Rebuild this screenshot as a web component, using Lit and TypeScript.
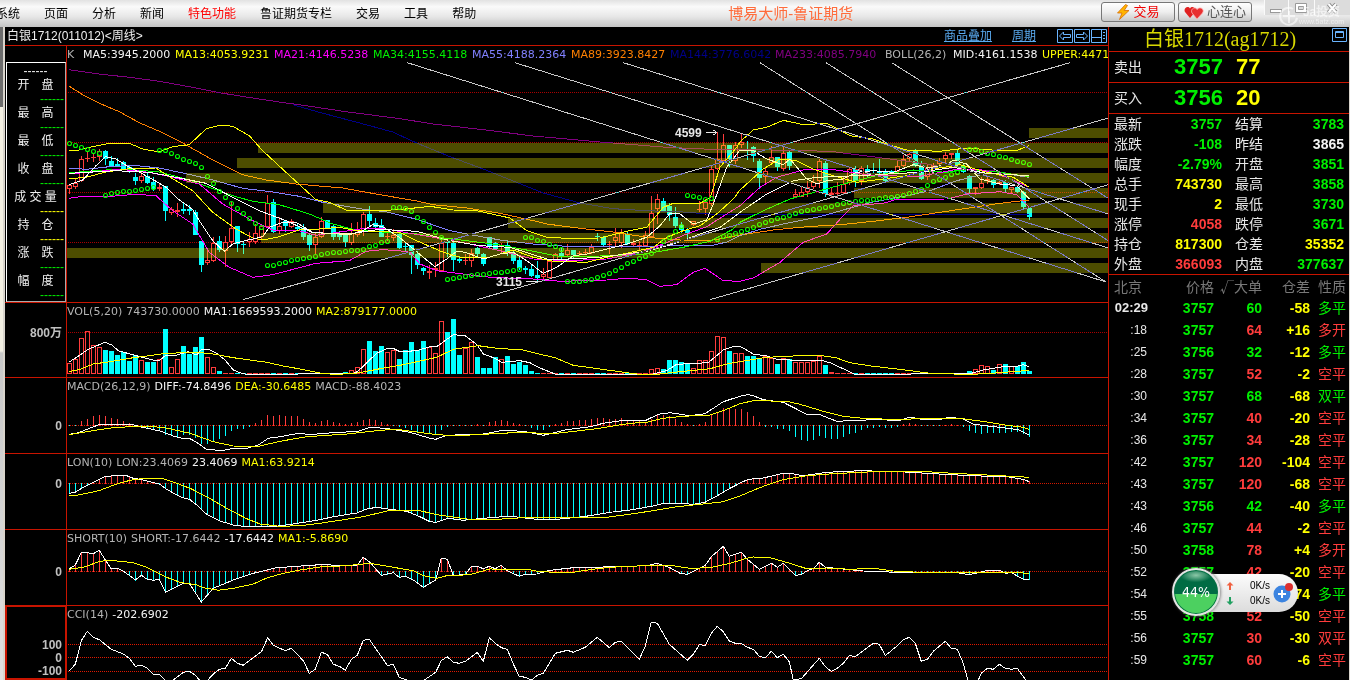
import { LitElement, html, css, svg } from "lit";
import { customElement } from "lit/decorators.js";

type Pts = number[];

/* Series are recorded on a grid of thirds of a pixel, in up to three stretches. */
const join = (step: number[], ...parts: Pts[]): Pts =>
  parts.flatMap((p, k) => p.map((v, j) => (j % 2 ? v : v + step[k])));
const S_MAIN = [0, 1002, 2022];
const S_SUB = [0, 1110, 2220];

const line = (pts: Pts, color: string) => {
  let d = "";
  for (let i = 0; i < pts.length; i += 2) d += `${(pts[i] / 3).toFixed(1)},${(pts[i + 1] / 3).toFixed(1)} `;
  return svg`<polyline points=${d} fill="none" stroke=${color} />`;
};

const at = (pts: Pts, x: number): number => {
  for (let i = 2; i < pts.length; i += 2) {
    if (x <= pts[i]) {
      const t = (x - pts[i - 2]) / (pts[i] - pts[i - 2] || 1);
      return pts[i - 1] + (pts[i + 1] - pts[i - 1]) * Math.max(0, t);
    }
  }
  return pts[pts.length - 1];
};

/* direction (1 rises, 0 falls), high, body top, body bottom, low */
const CANDLES = `1 420 422 436 450|1 405 418 430 436|1 335 345 412 415|1 325 342 345 355|1 330 340 343 355|1 315 320 338 352|0 318 321 345 362|0 335 350 368 368|0 342 360 366 370|0 350 355 374 376|0 365 370 375 388|0 388 398 411 424|1 385 396 412 418|0 388 396 416 420|0 400 415 435 440|1 418 430 434 442|0 425 426 500 530|1 488 495 508 513|1 478 498 503 520|0 478 496 500 510|0 484 496 500 514|0 498 503 572 572|0 590 591 662 684|1 615 648 656 662|1 580 598 650 654|0 577 591 618 624|1 575 594 620 668|1 475 552 594 600|0 545 546 600 624|0 592 600 604 630|1 565 584 594 608|1 540 568 594 600|1 540 545 578 584|1 453 478 548 550|0 465 474 563 567|1 520 546 560 570|0 528 532 545 565|1 525 530 550 552|0 540 548 555 560|0 540 552 578 588|0 570 574 603 622|1 565 580 602 630|1 520 532 580 582|0 527 529 552 556|0 540 546 578 588|0 562 570 578 588|0 566 574 594 608|1 538 566 596 602|1 535 564 572 578|1 505 510 560 576|0 486 509 530 545|0 522 538 550 558|0 525 543 578 580|1 568 576 580 590|1 556 574 583 590|0 570 571 611 614|0 595 605 609 622|0 602 604 632 690|0 620 630 662 676|0 668 672 682 692|1 663 680 688 704|1 655 672 678 698|1 585 596 680 684|0 585 592 598 640|0 585 596 648 680|0 635 646 650 658|1 630 648 652 664|1 615 626 652 668|0 610 612 630 636|0 628 630 660 665|0 578 580 605 615|0 595 597 614 616|1 598 604 610 628|0 590 604 626 636|0 620 630 650 660|0 632 648 673 678|0 666 672 678 690|0 660 676 697 700|0 652 693 702 712|1 672 690 700 710|1 650 652 702 704|1 628 630 650 654|0 610 627 640 644|1 600 618 634 640|0 617 619 634 645|1 620 626 630 640|1 615 624 628 634|1 600 608 628 630|0 568 576 580 590|0 576 578 602 606|1 590 600 604 630|1 552 580 592 606|1 555 564 598 612|0 560 570 600 602|1 585 598 602 606|1 590 602 606 620|1 562 572 606 610|1 455 508 578 582|1 450 465 496 540|0 462 470 500 504|0 478 485 512 530|0 490 520 546 552|0 534 542 558 566|0 552 558 566 582|1 530 532 542 546|1 470 494 498 504|1 465 474 494 512|1 365 376 480 486|1 265 345 376 378|1 270 303 350 355|0 303 304 346 370|1 295 303 350 360|1 270 295 302 312|0 290 316 320 348|0 305 310 335 355|0 346 350 402 434|1 370 380 400 416|1 306 340 358 362|0 338 340 368 380|1 310 328 376 380|0 322 324 366 378|1 436 450 460 462|1 425 443 458 460|1 412 428 445 460|1 392 414 430 434|1 345 352 412 432|0 350 357 450 458|1 430 446 452 460|1 414 448 450 460|1 400 420 448 454|1 372 376 418 424|0 366 374 410 430|1 366 372 410 424|0 362 374 385 400|0 358 378 382 388|0 345 380 386 394|0 375 382 410 414|0 378 380 388 390|1 350 365 384 390|1 334 345 366 370|1 328 330 346 354|0 315 320 366 370|0 350 362 404 408|1 360 370 400 408|1 358 362 368 374|1 342 352 360 366|1 324 334 344 356|1 326 328 334 344|0 316 328 364 366|0 360 366 384 386|0 392 396 434 450|1 428 430 436 452|1 400 416 432 436|1 400 404 410 420|0 402 408 424 432|1 405 414 420 424|0 408 414 434 444|1 428 430 438 450|0 422 428 444 448|0 440 444 488 494|0 488 492 520 528`
  .split("|").map((r) => r.split(" ").map(Number));

const SAR = [298,303,310,316,322,328,452,448,445,442,442,439,436,433,430,317,319,328,337,344,352,358,370,397,418,440,460,478,493,508,522,536,548,664,662,656,653,649,645,641,638,635,631,628,625,623,621,619,617,615,607,602,595,590,488,488,493,502,518,530,548,565,580,704,701,698,695,692,691,690,688,685,683,681,678,675,580,580,587,592,600,607,614,712,712,711,708,704,700,692,686,679,668,658,650,642,635,628,614,592,578,562,547,452,457,460,464,463,585,577,572,567,560,554,548,540,534,528,522,518,514,507,502,499,496,493,490,485,481,478,474,472,469,467,465,462,460,458,456,453,447,442,434,422,412,405,398,390,384,372,314,316,322,328,331,337,340,346,350,355,361];

const flat = (n: number) => Array(n).fill(219);
const VOL = [190,178,115,94,136,142,150,153,165,155,183,165,180,186,186,178,87,202,178,138,162,142,111,172,202,213,...flat(20),216,211,202,147,123,153,138,157,150,178,150,126,150,123,140,160,64,96,57,165,145,127,171,204,204,171,178,168,192,186,195,213,...flat(19),208,205,208,180,180,186,191,205,181,181,154,109,112,153,160,160,168,168,174,169,175,192,175,178,186,186,186,182,167,195,217,...flat(22),213,208,196,199,210,193,192,199,199,186,213];

const MACD = [376,376,363,357,350,345,348,354,357,363,370,376,380,383,387,389,402,405,408,404,404,411,429,431,424,416,407,390,386,384,379,369,360,345,348,345,348,348,350,357,366,369,363,360,366,369,372,369,366,360,357,360,366,372,376,378,381,387,393,397,401,401,387,378,377,377,377,376,372,376,366,363,360,363,369,374,377,381,387,387,378,372,369,363,363,360,360,357,354,354,357,357,354,360,360,363,366,357,345,345,350,357,366,374,376,372,366,346,336,324,326,327,327,336,348,366,378,378,384,384,390,408,417,420,417,405,411,414,414,408,400,396,387,383,381,378,381,381,378,374,369,372,376,376,376,376,375,372,375,378,390,396,399,396,396,396,396,393,393,399,408];

const AVERAGES: [string, Pts][] = [
  ["#800080", join(S_MAIN, [10,77,100,90,190,100,280,112,370,128,460,146,560,162,640,174,740,188,840,203,940,216], [0,224,100,240,250,257,400,276,600,294,800,310,930,316], [0,316,270,322,350,332,450,345,560,360,640,376,760,380,868,400])],
  ["#000088", join(S_MAIN, [680,182,760,205,900,242,980,264], [50,297,150,338,250,375,330,407,430,447,540,477,640,494,740,500,850,504,940,511], [0,511,868,512])],
  ["#ff8000", join(S_MAIN, [10,127,50,152,110,182,160,203,220,236,280,262,350,297,430,342,530,392,600,408,690,420,830,432,930,450], [50,471,100,482,200,492,300,508,400,530,440,540,540,553,640,564,740,580,850,589,940,588], [0,573,100,558,200,548,300,542,400,532,500,520,600,505,700,490,780,478,868,468])],
  ["#8080ff", join(S_MAIN, [10,372,60,376,130,368,200,364,280,372,350,387,430,405,530,433,620,444,700,457,770,475,840,487,900,497,960,503], [50,526,150,560,200,570,300,588,400,600,500,607,620,608,740,607,850,603,930,606,980,594], [0,575,60,556,130,540,240,518,330,492,400,474,500,455,570,440,650,410,740,388,800,390,868,400])],
  ["#00ff00", join(S_MAIN, [10,386,120,378,200,377,280,384,360,405,430,430,500,455,560,472,640,482,730,510,800,540,870,558,960,565], [50,570,100,578,200,590,300,603,400,622,480,638,600,636,720,632,780,622,850,610,930,592,1000,555], [0,535,70,500,150,465,240,440,330,415,420,392,520,378,620,385,680,375,780,385,868,398])],
  ["#ff00ff", join(S_MAIN, [10,390,100,382,160,376,230,382,300,395,350,408,400,420,470,480,550,525,620,558,700,560,750,574,850,560,900,552,960,555], [20,566,100,580,200,598,300,620,400,645,500,650,620,645,720,625,790,600,860,570,920,548,980,510], [0,485,60,430,110,400,200,375,270,375,400,395,540,397,640,378,720,376,800,400,868,430])],
  ["#ffff00", join(S_MAIN, [10,404,60,400,120,384,190,374,270,372,310,398,380,440,440,505,510,555,560,582,590,588,640,578,700,558,760,555,820,550,870,560,1000,565], [50,590,130,625,180,640,260,642,340,618,400,640,460,652,560,655,620,640,680,628,760,610,800,580,850,560,900,545,950,510,1000,465], [0,438,70,375,120,345,170,350,220,375,280,395,350,415,430,405,500,395,580,375,660,362,740,385,820,400,868,430])],
  ["#ffffff", join(S_MAIN, [10,388,150,380,250,385,330,400,420,418,500,460,580,500,660,530,740,566,850,570,940,556], [50,562,150,590,240,605,330,610,450,648,600,640,740,622,820,600,900,570,960,550], [0,505,80,450,160,410,230,400,350,395,540,385,640,370,740,388,868,395])],
  ["#ffffff", join(S_MAIN, [10,422,50,408,90,365,118,338,150,345,190,370,230,390,270,412,300,430,330,460,380,497,400,530,440,590,475,622,500,600,530,592,590,578,610,550,650,535,690,535,740,565,850,572,890,560,920,542,950,548,1000,580], [34,610,70,640,105,668,140,645,170,622,196,625,250,645,300,630,340,625,380,650,430,688,470,670,520,635,560,630,620,615,680,600,740,580,780,545,810,508,840,510,880,540,920,528,940,480,980,370], [0,318,40,320,80,345,130,362,150,345,200,405,230,420,260,410,310,405,350,385,400,380,460,385,520,362,560,372,620,362,640,348,680,360,720,405,780,420,830,425,868,465])],
  ["#ffff00", join(S_MAIN, [10,320,40,318,80,308,130,298,190,298,230,315,280,324,320,308,370,302,420,255,440,249,465,243,500,247,550,275,590,320,660,385,750,467,790,475,840,498,920,500,1000,497], [90,487,160,498,230,500,330,522,380,560,440,580,500,583,600,582,680,562,740,550,790,490,820,478,900,478,930,462,960,370,1010,310], [0,293,40,258,80,250,130,229,190,242,260,238,330,275,400,285,440,300,500,318,600,322,680,312,780,320,835,318,868,304])],
  ["#ff00ff", join(S_MAIN, [10,463,50,457,120,458,210,451,270,455,320,500,380,540,430,625,490,670,560,700,620,692,750,658,850,650,900,622,950,617,1000,620], [30,625,60,660,110,680,190,690,270,700,400,705,480,712,620,708,690,702,740,708,780,727,830,722,880,685,915,673,970,710], [0,712,40,702,120,655,190,595,260,570,310,515,340,485,430,478,470,466,620,465,680,450,780,443,830,452,868,490])],
];

const TRENDS: Pts[] = [
  [530,767,3012,56], [1232,767,3127,222], [1932,767,3127,422],
  [1024,56,3120,714], [1347,56,3127,612], [1672,56,3127,510],
  [2082,56,3120,714], [2280,56,3127,590], [2477,56,3127,463],
];

/* left edge and top of each cost band */
const BANDS = [[962,66],[191,81],[170,96],[119,111],[787,126],[256,141],[441,156],[194,171],[0,186],[694,201]];

const VOL1 = join(S_SUB, [208,186,240,165,265,148,315,127,335,135,355,152,390,162,420,170,460,180,480,180,497,166,520,168,565,155,590,165,605,147,625,147,650,160,675,180,700,210,725,220,740,223,1060,221,1075,213,1100,188], [20,160,50,146,72,146,90,155,140,152,180,140,200,140,250,104,285,107,320,133,340,162,375,175,395,187,450,182,480,188,505,202,555,222,850,222,890,212,920,193,980,190,1015,188,1060,150,1085,141], [0,139,40,162,80,168,110,178,190,182,240,180,270,188,300,202,345,223,690,221,730,210,790,200,830,199,850,194,868,200]);
const VOL2 = join(S_SUB, [208,215,240,208,280,192,330,185,400,173,440,168,500,160,590,157,640,162,700,173,800,187,850,198,900,207,960,219,1000,223,1060,221,1110,212], [30,206,100,194,200,172,250,148,325,137,380,145,460,150,520,165,555,173,610,196,740,214,800,222,870,222,920,216,1020,206,1070,192], [0,185,80,172,160,168,240,166,290,174,330,188,400,199,480,208,580,221,700,223,780,218,868,211]);
const DIFF = join(S_SUB, [208,403,230,400,300,373,400,374,420,380,480,393,520,408,545,415,570,416,590,427,620,449,670,451,700,445,740,445,775,435,805,415,840,410,890,401,940,403,1000,398,1075,394,1110,382], [30,384,60,387,120,397,180,415,197,418,230,406,340,402,400,391,460,394,520,406,590,389,660,380,700,370,760,361,825,362,865,343,900,338,960,347,1005,341,1060,305], [5,287,25,284,40,287,70,299,130,307,165,325,205,345,240,344,290,364,400,359,480,361,510,351,545,358,600,358,630,352,670,357,700,373,780,382,835,389,868,405]);
const DEA = join(S_SUB, [208,404,290,390,350,382,430,379,490,382,570,400,640,425,700,438,770,440,840,424,920,410,1040,402], [30,391,80,388,200,404,260,407,430,398,560,400,680,386,780,370,830,367,880,355,940,349,1020,345,1070,328], [0,311,40,302,140,304,180,313,250,334,310,349,370,355,450,358,660,355,740,366,800,376,840,380,868,388]);
const LON1 = join(S_SUB, [208,580,225,577,250,562,290,542,315,530,350,526,380,527,400,535,430,540,480,553,500,568,540,590,570,599,590,615,620,643,660,663,700,675,740,680,820,680,880,672,960,659,1000,650,1070,639,1100,627], [20,622,60,628,110,634,150,650,180,665,197,667,235,655,280,661,340,655,400,650,440,651,500,658,560,658,640,650,720,637,780,630,850,618,880,610,930,610,970,613,1005,607,1040,588,1080,565], [5,547,25,538,70,534,130,520,150,520,190,527,260,517,360,512,480,515,560,520,690,527,800,530,850,538,868,545]);
const LON2 = join(S_SUB, [208,586,230,586,270,578,300,571,350,552,390,541,430,535,490,536,520,546,570,565,620,590,680,625,740,656,780,672,840,679,900,677,960,670,1090,650], [60,631,150,632,200,644,290,657,380,658,460,653,700,653,800,640,920,620,1000,612,1060,605], [0,588,40,571,80,555,130,539,200,527,280,521,400,515,540,514,640,520,760,526,868,532]);
const SHORT1 = join(S_SUB, [208,806,226,795,244,758,262,758,280,761,298,751,316,780,334,807,352,805,370,814,388,826,406,840,424,826,442,838,460,841,478,838,497,877,550,850,568,850,604,906,640,865,700,840,760,820,830,803,960,794,1070,797,1090,772], [0,787,34,826,70,818,88,832,106,828,130,840,160,862,197,840,214,775,232,778,250,826,286,824,304,799,322,799,340,806,358,799,376,806,394,796,412,812,448,829,466,823,500,822,540,811,610,803,740,800,830,797,862,790,900,803,930,820,952,823,1006,796,1024,770,1060,739,1078,769], [4,757,22,778,58,808,94,790,112,802,130,790,166,826,184,824,202,812,220,806,238,787,256,802,300,806,370,813,500,818,650,818,688,824,740,812,780,812,796,820,814,818,850,838,868,838]);
const SHORT2 = join(S_SUB, [208,808,250,802,300,784,330,781,400,788,440,802,500,832,540,847,590,855,610,863,655,871,700,865,760,852,800,834,850,820,900,810,960,801,1040,797], [0,790,130,812,160,827,200,835,230,827,300,824,360,807,470,808,510,815,600,818,680,806,760,799,900,796,960,805,1020,803,1080,790], [20,775,40,771,90,773,150,790,200,806,260,804,330,808,400,805,460,813,560,818,830,817,868,821]);
const CCI = join(S_SUB, [208,1112,226,1093,244,1022,262,994,280,1012,298,1019,334,1048,370,1062,388,1075,406,1099,424,1096,442,1105,460,1123,478,1123,497,1143,515,1143,550,1117,568,1114,586,1126,604,1146,622,1142,640,1122,658,1108,676,1105,694,1075,712,1090,730,1096,785,1054,803,1013,820,1036,856,1052,874,1045,910,1082,928,1120,946,1108,964,1057,982,1063,1000,1093,1018,1099,1036,1111,1054,1078,1072,1066,1090,1021,1108,1018], [52,1096,70,1094,88,1132,110,1140,160,1142,197,1117,214,1082,232,1070,250,1087,268,1090,286,1084,322,1057,340,1084,358,1013,376,1030,394,1043,412,1048,430,1092,448,1129,466,1132,484,1141,502,1126,520,1120,556,1060,592,1051,610,1057,646,1042,682,1012,718,1043,736,1027,754,1024,808,1078,826,1038,844,967,862,970,898,1033,952,1081,970,1063,988,1034,1006,1036,1024,1000,1042,979,1060,995,1078,1023,1096,1030], [4,1030,22,1042,40,1048,58,1069,76,1073,94,1054,112,1073,130,1063,148,1085,160,1140,184,1136,238,1075,256,1100,274,1114,292,1105,310,1090,328,1066,346,1070,400,1030,418,1033,436,1067,472,1037,490,1019,508,1012,526,1030,544,1084,562,1078,580,1054,616,1024,634,1045,652,1048,670,1090,684,1142,714,1142,724,1120,742,1105,760,1108,778,1093,796,1105,814,1108,832,1105,850,1130,862,1146]);

const RED = "#ff3c3c";
const CYAN = "#00ffff";

const guide = (y: number, color = "#a80000") =>
  svg`<line x1="1" x2="100%" y1=${y + 0.5} y2=${y + 0.5} stroke=${color} stroke-dasharray="1 1" />`;

const stems = (ends: number[], zero: number, dy: number) =>
  ends.map((v, i) => {
    const a = Math.floor(zero / 3), b = Math.floor(v / 3);
    return svg`<rect x=${2 + 6 * i} y=${Math.min(a, b) + dy} width="1" height=${Math.abs(a - b) + 1} fill=${v < zero ? RED : CYAN} />`;
  });

const sampled = (pts: Pts) => CANDLES.map((_, i) => at(pts, 208 + 18 * i));

const bar = (i: number, top: number, bottom: number, up: boolean) =>
  up && bottom - top > 1
    ? svg`<rect x=${0.5 + 6 * i} y=${top + 0.5} width="4" height=${bottom - top - 1} fill="none" stroke=${RED} />`
    : svg`<rect x=${6 * i} y=${top} width="5" height=${Math.max(1, bottom - top)} fill=${up ? RED : CYAN} />`;

const mainChart = () => svg`
  ${[30, 80, 130, 180].map((y) => guide(y))}
  ${CANDLES.map(([up, h, t, b, l], i) => {
    const f = (v: number) => Math.round(v / 3) - 18;
    const top = f(t), bot = f(b), c = up ? RED : CYAN;
    return svg`
      <rect x=${2 + 6 * i} y=${f(h)} width="1" height=${Math.max(0, top - f(h))} fill=${c} />
      <rect x=${2 + 6 * i} y=${bot} width="1" height=${Math.max(0, f(l) - bot)} fill=${c} />
      ${bar(i, top, bot, !!up)}`;
  })}
  <g transform="translate(-1,-18)">${AVERAGES.map(([c, p]) => line(p, c))}</g>
  ${SAR.map((v, i) => svg`<circle cx=${2.5 + 6 * i} cy=${Math.round(v / 3) - 17.5} r="2" fill="none" stroke="#00ff00" stroke-width="1.1" shape-rendering="auto" />`)}
  ${BANDS.map(([x, y]) => svg`<rect x=${x} y=${y} width="100%" height="10" fill="#ffff00" fill-opacity="0.3" />`)}
  <g transform="translate(-1,-18)" class="trends">${TRENDS.map((p) => line(p, "#c8c8c8"))}</g>
  <text class="mark" x="608" y="75">4599</text>
  <path d="M638.5 70.5H650M646.5 68L649.5 70.5L646.5 73" stroke="#e8e8e8" fill="none" />
  <text class="mark" x="429" y="224">3115</text>
  <path d="M459 219.5H471" stroke="#e8e8e8" fill="none" />`;

const volChart = () => svg`
  ${guide(13)}
  ${VOL.map((v, i) => bar(i, Math.min(Math.round(v / 3), 73) - 19, 55, !!CANDLES[i]?.[0]))}
  <g transform="translate(-67,-19)">${line(VOL1, "#fff")}${line(VOL2, "#ff0")}</g>`;

const macdChart = () => svg`
  ${guide(31, "#d01800")}${stems(MACD, 376, -94)}
  <g transform="translate(-67,-94)">${line(DIFF, "#fff")}${line(DEA, "#ff0")}</g>`;

const lonChart = () => svg`
  ${guide(13, "#d01800")}${stems(sampled(LON1), 550, -170)}
  <g transform="translate(-67,-170)">${line(LON1, "#fff")}${line(LON2, "#ff0")}</g>`;

const shortChart = () => svg`
  ${guide(25, "#d01800")}${stems(sampled(SHORT1), 814, -246)}
  <g transform="translate(-67,-246)">${line(SHORT1, "#fff")}${line(SHORT2, "#ff0")}</g>`;

const cciChart = () => svg`
  ${[22, 35, 49].map((y) => guide(y, "#e01800"))}
  <g transform="translate(-67,-322)">${line(CCI, "#fff")}</g>`;

const QUOTES = [
  ["最新", "3757", "g", "结算", "3783", "g"],
  ["涨跌", "-108", "g", "昨结", "3865", "w"],
  ["幅度", "-2.79%", "g", "开盘", "3851", "g"],
  ["总手", "743730", "y", "最高", "3858", "g"],
  ["现手", "2", "y", "最低", "3730", "g"],
  ["涨停", "4058", "r", "跌停", "3671", "g"],
  ["持仓", "817300", "y", "仓差", "35352", "y"],
  ["外盘", "366093", "r", "内盘", "377637", "g"],
];

const TICKS = [
  ["02:29", "3757", "60", "g", "-58", "多平", "g"],
  [":18", "3757", "64", "r", "+16", "多开", "r"],
  [":25", "3756", "32", "g", "-12", "多平", "g"],
  [":28", "3757", "52", "r", "-2", "空平", "r"],
  [":30", "3757", "68", "g", "-68", "双平", "g"],
  [":34", "3757", "40", "r", "-20", "空平", "r"],
  [":36", "3757", "34", "r", "-28", "空平", "r"],
  [":42", "3757", "120", "r", "-104", "空平", "r"],
  [":43", "3757", "120", "r", "-68", "空平", "r"],
  [":43", "3756", "42", "g", "-40", "多平", "g"],
  [":46", "3757", "44", "r", "-2", "空平", "r"],
  [":50", "3758", "78", "r", "+4", "多开", "r"],
  [":52", "3757", "42", "r", "-20", "空平", "r"],
  [":54", "3757", "42", "g", "-74", "多平", "g"],
  [":55", "3758", "52", "r", "-50", "空平", "r"],
  [":56", "3757", "30", "r", "-30", "双平", "r"],
  [":59", "3757", "60", "r", "-6", "空平", "r"],
];

@customElement("app-root")
export class AppRoot extends LitElement {
  static styles = css`
    :host {
      display: flex;
      flex-direction: column;
      height: 100vh;
      overflow: hidden;
      background: #000;
      color: #e8e8e8;
      font: 12px/14px "Liberation Sans", "Noto Sans CJK SC", sans-serif;
    }
    * { box-sizing: border-box; }
    button { font: inherit; color: inherit; border: 0; background: none; padding: 0; margin: 0; }
    a { color: #5aaaf0; }
    svg { display: block; flex: none; }
    .top {
      position: relative;
      flex: none;
      display: flex;
      align-items: center;
      height: 27px;
      color: #000;
      background: linear-gradient(#e2e2e2, #fafafa 25%, #e8e8e8 60%, #c4c4c4);
    }
    .menu { display: flex; gap: 24px; margin-left: -4px; flex: 28 1 0; }
    .menu button { white-space: nowrap; }
    .menu .hot { color: #f00; }
    .brand { margin: 0; font-size: 15px; font-weight: 400; line-height: 20px; color: #ff6c3c; white-space: nowrap; }
    .tools { flex: 19 1 0; display: flex; justify-content: flex-end; align-items: center; gap: 3px; }
    .tool {
      display: flex; align-items: center; justify-content: center; gap: 3px;
      width: 74px; height: 20px; margin-bottom: 3px;
      border: 1px solid #777; border-radius: 3px;
      background: linear-gradient(#fff, #eee 50%, #c8c8c8);
      font-size: 13px; color: #555;
    }
    .tool.red { color: #f00000; }
    .win { display: flex; margin-left: 9px; margin-bottom: 12px; }
    .win button { width: 24px; height: 15px; border-left: 1px solid #fafafa; background: #dcdcdc; display: grid; place-items: center; }
    .win button:nth-child(2) { width: 26px; }
    .win button:nth-child(3) { width: 36px; }
    .stamp { position: absolute; right: 6px; top: 6px; display: flex; align-items: flex-end; color: #fff; opacity: 0.6; font-size: 7px; line-height: 8px; pointer-events: none; }
    .stamp div { text-align: center; }
    .stamp strong { display: block; font-size: 12px; line-height: 12px; }
    .body { flex: 1; min-height: 0; display: flex; }
    .edge {
      flex: none; width: 5px; border-right: 2px solid #d8d4cc;
      background: linear-gradient(#6c6c6c 80px, #f2efe2 80px, #f2efe2 324px, #c8c8c8 326px, #e0e0e0);
    }
    .charts { flex: 1; min-width: 0; display: flex; flex-direction: column; border-right: 1px solid #c81400; }
    .bar { flex: none; display: flex; align-items: center; height: 19px; border-bottom: 1px solid #c81400; padding: 0 1px 0 2px; }
    .bar h1 { margin: 0; font: inherit; flex: 1; color: #f0f0f0; }
    .bar nav { display: flex; gap: 20px; margin-right: 21px; }
    .icons { display: flex; gap: 1px; }
    .panel { flex: none; display: grid; grid-template-columns: 62px 1fr; border-bottom: 1px solid #c81400; }
    .panel.k { height: 257px; }
    .panel.v { height: 75px; }
    .panel.s { height: 76px; }
    .panel.last { flex: 1; min-height: 0; border-bottom: 0; }
    .axis { border-right: 1px solid #c81400; padding-right: 4px; text-align: right; font-weight: 700; line-height: 13px; color: #c0c0c0; }
    .axis.a { padding-top: 24px; }
    .axis.b { padding-top: 42px; }
    .axis.c { padding-top: 24px; }
    .axis.d { padding-top: 36px; }
    .axis.e { padding-top: 32px; border: 2px solid #c81400; border-top-width: 1px; padding-right: 3px; }
    .axis.box { padding: 16px 0 0 1px; }
    .readout { border: 1px solid #fff; border-right-color: #aaa; border-bottom-color: #aaa; height: 240px; padding: 2px 1px 0 0; font-weight: 400; color: #f0f0f0; }
    .readout dl, .readout dd { margin: 0; }
    .readout p { margin: 0; text-align: center; line-height: 12px; }
    .readout dt { text-align: center; line-height: 16px; }
    .readout dd { line-height: 12px; text-align: right; }
    .plot { min-width: 0; overflow: hidden; display: flex; flex-direction: column; }
    .plot svg { width: 100%; height: 240px; overflow: visible; shape-rendering: crispEdges; }
    .legend {
      flex: none; display: flex; gap: 4px; height: 16px; padding-top: 2px;
      font-family: "DejaVu Sans", "Noto Sans", sans-serif; font-size: 11px; white-space: nowrap; color: #b4b4b4;
    }
    .k .legend { display: grid; gap: 0; grid-template-columns: 16px 92px repeat(5, 99px) 105px 110px 68px 89px 1fr; }
    .mark { font-weight: 700; font-size: 12px; fill: #e8e8e8; }
    .trends { mix-blend-mode: difference; }
    .w { color: #f4f4f4; } .y { color: #ffff00; } .g { color: #00f000; } .r { color: #ff3c3c; }
    .m { color: #ff00ff; } .p { color: #8080ff; } .o { color: #ff8000; } .n { color: #000088; } .u { color: #800080; }
    .side { flex: none; width: 240px; font-size: 14px; position: relative; }
    .wall { flex: none; width: 1px; background: #d8d4cc; }
    .name { display: flex; height: 25px; border-bottom: 1px solid #c81400; }
    .name h2 { flex: 1; margin: 0; text-align: center; font: 20px/25px "Liberation Serif", "Noto Sans CJK SC", serif; color: #d8d800; }
    .deal { display: flex; align-items: center; height: 31px; border-bottom: 1px solid #c81400; padding-left: 5px; }
    .deal b { font-size: 22px; line-height: 30px; }
    .deal span { width: 60px; }
    .deal b.g { width: 62px; }
    table { border-collapse: collapse; table-layout: fixed; width: 100%; }
    td, th { padding: 0; font-weight: 400; white-space: nowrap; }
    .quotes { border-bottom: 1px solid #c81400; }
    .quotes tr { height: 20px; }
    .quotes th { text-align: left; padding-left: 5px; color: #e8e8e8; }
    .quotes td { text-align: right; font-weight: 700; }
    .quotes th:nth-child(3) { padding-left: 13px; }
    .quotes td:last-child { padding-right: 5px; }
    .c1 { width: 41px; } .c2 { width: 72px; } .c3 { width: 45px; }
    .t1 { width: 39px; } .t2 { width: 66px; } .t3, .t4 { width: 48px; }
    .ticks tr { height: 22px; }
    .ticks th { color: #787878; text-align: right; font-family: "Noto Sans CJK SC", sans-serif; }
    .ticks td { text-align: right; font-weight: 700; }
    .ticks th:first-child { text-align: left; padding-left: 5px; }
    .ticks td:first-child { font-size: 12px; font-weight: 400; padding-right: 1px; }
    .ticks tbody tr:first-child td:first-child { font-size: 13px; font-weight: 700; padding-right: 0; }
    .ticks th:last-child, .ticks td:last-child { padding-right: 3px; font-weight: 400; }
    .meter { position: absolute; right: 51px; top: 541px; width: 126px; height: 48px; display: flex; align-items: center; color: #000; }
    .ball {
      width: 48px; height: 48px; border-radius: 50%; border: 2px solid #e4e4e4; flex: none;
      display: grid; place-items: center; color: #fff; font: 14px/16px "DejaVu Sans Condensed", sans-serif;
      background: radial-gradient(ellipse 16px 7px at 50% 12%, #8cc8a8, transparent), linear-gradient(#006c44 54%, #4cd060 55%);
      box-shadow: inset 0 0 0 1px #067044, 1px 0 3px #888; z-index: 1;
    }
    .pill {
      flex: 1; height: 38px; margin: 2px 0 0 -24px; padding: 0 5px 0 30px; border-radius: 0 19px 19px 0;
      background: linear-gradient(#fcfcfc, #dcdcdc); display: flex; align-items: center; justify-content: space-between;
    }
    .rates { display: grid; grid-template-columns: 18px 26px; line-height: 15px; font-size: 10px; text-align: right; align-items: center; }
  `;

  render() {
    return html`
      <header class="top">
        <nav class="menu">
          ${["系统", "页面", "分析", "新闻", "特色功能", "鲁证期货专栏", "交易", "工具", "帮助"].map(
            (t) => html`<button class=${t === "特色功能" ? "hot" : ""}>${t}</button>`)}
        </nav>
        <p class="brand">博易大师-鲁证期货</p>
        <div class="tools">
          <button class="tool red">
            <svg width="14" height="16" viewBox="0 0 14 16"><path d="M9.5 .5L1.5 9H6L3.5 15.5L13 6.5H8.2L11.5 1.5Z" fill="#ffb400" stroke="#d86c00" stroke-width=".8"/></svg>交易
          </button>
          <button class="tool">
            <svg width="20" height="13" viewBox="0 0 20 13"><path d="M6 12L1 6C-1 2 4-1 6 2.5C8-1 13 2 11 6Z" fill="#e02020"/><path d="M13 13L8 7C6 3 11 0 13 3.5C16 0 21 3 18.5 7Z" fill="#e83030" stroke="#ffb0b0" stroke-width=".8"/></svg>心连心
          </button>
          <div class="win">
            <button aria-label="最小化"><svg width="13" height="12"><rect x=".5" y="7.5" width="11" height="3" fill="#fff" stroke="#999"/></svg></button>
            <button aria-label="还原"><svg width="13" height="12"><path d="M.5 1.5H11.5V10.5H.5ZM3.5 4.5H8.5V7.5H3.5Z" fill="#fff" fill-rule="evenodd" stroke="#999"/></svg></button>
            <button aria-label="关闭"><svg width="13" height="12"><path d="M2.5 2L10 10.500M10 2L2.5 10.500" stroke="#888" stroke-width="4"/><path d="M2.5 2L10 10.500M10 2L2.5 10.500" stroke="#fff" stroke-width="2"/></svg></button>
          </div>
        </div>
        <div class="stamp">
          <svg width="20" height="20" fill="none" stroke="#fff" stroke-width="2"><path d="M14 3A8.500 8.500 0 1 0 18 12M10 5V17M4 10H16"/></svg>
          <div><strong>5a投资</strong>www.5atz.com</div>
        </div>
      </header>
      <main class="body">
        <div class="edge"></div>
        <section class="charts">
          <div class="bar">
            <h1>白银1712(011012)&lt;周线&gt;</h1>
            <nav><a href="#overlay">商品叠加</a><a href="#period">周期</a></nav>
            <div class="icons">
              <svg width="16" height="14" fill="none" stroke="#6ab4ff"><path d="M.5 .5H15.5V13.5H.5ZM2.5 7L6.5 3V5.5H13.5V8.5H6.5V11Z"/></svg>
              <svg width="16" height="14" fill="none" stroke="#6ab4ff"><path d="M.5 .5H15.5V13.5H.5ZM13.5 7L9.5 3V5.5H2.5V8.5H9.5V11Z"/></svg>
              <svg width="16" height="14" fill="none" stroke="#6ab4ff"><path d="M.5 .5H15.5V13.5H.5ZM10.5 1V13M1 8.5H10M12 3.5H14M12 6.5H14M12 9.5H14"/></svg>
            </div>
          </div>

          <div class="panel k">
            <div class="axis box">
              <div class="readout">
                <p>------</p>
                <dl>
                  ${[["开　盘", "g"], ["最　高", "g"], ["最　低", "g"], ["收　盘", "g"], ["成 交 量", "y"], ["持　仓", "y"], ["涨　跌", "g"], ["幅　度", "g"]].map(
                    ([t, c]) => html`<dt>${t}</dt><dd class=${c}>------</dd>`)}
                </dl>
              </div>
            </div>
            <div class="plot">
              <div class="legend">
                <span>K</span><span class="w">MA5:3945.2000</span><span class="y">MA13:4053.9231</span>
                <span class="m">MA21:4146.5238</span><span class="g">MA34:4155.4118</span><span class="p">MA55:4188.2364</span>
                <span class="o">MA89:3923.8427</span><span class="n">MA144:3776.6042</span><span class="u">MA233:4085.7940</span>
                <span>BOLL(26,2)</span><span class="w">MID:4161.1538</span><span class="y">UPPER:4471</span>
              </div>
              <svg>${mainChart()}</svg>
            </div>
          </div>

          <div class="panel v">
            <div class="axis a">800万</div>
            <div class="plot">
              <div class="legend"><span>VOL(5,20)</span><span>743730.0000</span><span class="w">MA1:1669593.2000</span><span class="y">MA2:879177.0000</span></div>
              <svg>${volChart()}</svg>
            </div>
          </div>

          <div class="panel s">
            <div class="axis b">0</div>
            <div class="plot">
              <div class="legend"><span>MACD(26,12,9)</span><span class="w">DIFF:-74.8496</span><span class="y">DEA:-30.6485</span><span>MACD:-88.4023</span></div>
              <svg>${macdChart()}</svg>
            </div>
          </div>

          <div class="panel s">
            <div class="axis c">0</div>
            <div class="plot">
              <div class="legend"><span>LON(10)</span><span>LON:23.4069</span><span class="w">23.4069</span><span class="y">MA1:63.9214</span></div>
              <svg>${lonChart()}</svg>
            </div>
          </div>

          <div class="panel s">
            <div class="axis d">0</div>
            <div class="plot">
              <div class="legend"><span>SHORT(10)</span><span>SHORT:-17.6442</span><span class="w">-17.6442</span><span class="y">MA1:-5.8690</span></div>
              <svg>${shortChart()}</svg>
            </div>
          </div>

          <div class="panel last">
            <div class="axis e">100<br />0<br />-100</div>
            <div class="plot">
              <div class="legend"><span>CCI(14)</span><span class="w">-202.6902</span></div>
              <svg>${cciChart()}</svg>
            </div>
          </div>
        </section>

        <aside class="side">
          <div class="name">
            <h2>白银1712(ag1712)</h2>
            <svg width="18" height="16" fill="none" stroke="#6ab4ff"><path d="M1.5 1.5H15.5V14.5H1.5Z"/><path d="M4.5 4.5H12.5V10.5H4.5ZM4 5.5H13"/></svg>
          </div>
          <div class="deal"><span>卖出</span><b class="g">3757</b><b class="y">77</b></div>
          <div class="deal"><span>买入</span><b class="g">3756</b><b class="y">20</b></div>
          <table class="quotes">
            <colgroup><col class="c1" /><col class="c2" /><col class="c3" /><col /></colgroup>
            <tbody>
              ${QUOTES.map(([a, b, c, d, e, f]) => html`<tr><th scope="row">${a}</th><td class=${c}>${b}</td><th scope="row">${d}</th><td class=${f}>${e}</td></tr>`)}
            </tbody>
          </table>
          <table class="ticks">
            <colgroup><col class="t1" /><col class="t2" /><col class="t3" /><col class="t4" /><col /></colgroup>
            <thead><tr><th>北京</th><th>价格</th><th>√大单</th><th>仓差</th><th>性质</th></tr></thead>
            <tbody>
              ${TICKS.map(([t, p, n, nc, d, k, kc]) => html`<tr><td>${t}</td><td class="g">${p}</td><td class=${nc}>${n}</td><td class="y">${d}</td><td class=${kc}>${k}</td></tr>`)}
            </tbody>
          </table>
          <div class="meter">
            <div class="ball">44%</div>
            <div class="pill">
              <div class="rates">
                <svg width="8" height="8"><path d="M4 0L7.5 3.5H5V8H3V3.5H.5Z" fill="#f06040"/></svg><span>0K/s</span>
                <svg width="8" height="8"><path d="M4 8L7.5 4.5H5V0H3V4.5H.5Z" fill="#20a060"/></svg><span>0K/s</span>
              </div>
              <svg width="20" height="20"><circle cx="9" cy="11" r="8.5" fill="#3c84e0"/><path d="M9 7V15M5 11H13" stroke="#fff" stroke-width="2"/><circle cx="16" cy="4" r="4" fill="#dc3030"/></svg>
            </div>
          </div>
        </aside>
        <div class="wall"></div>
      </main>
    `;
  }
}
